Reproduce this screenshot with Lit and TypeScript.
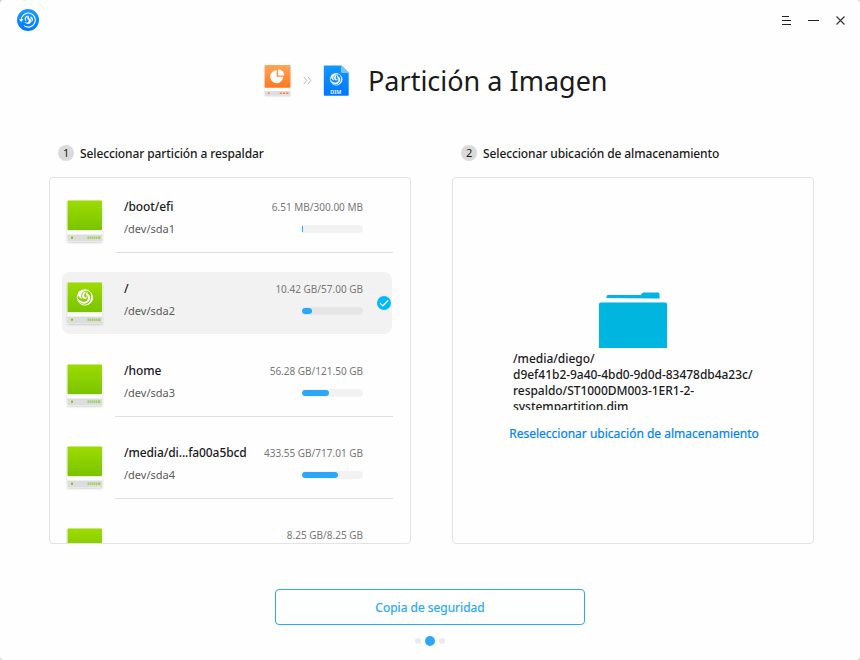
import { LitElement, html, svg, css, nothing } from "lit";
import { customElement, property } from "lit/decorators.js";

interface Partition {
  name: string;
  device: string;
  usage: string;
  fill: number;
  system?: boolean;
  selected?: boolean;
}

const PARTITIONS: Partition[] = [
  { name: "/boot/efi", device: "/dev/sda1", usage: "6.51 MB/300.00 MB", fill: 1 },
  { name: "/", device: "/dev/sda2", usage: "10.42 GB/57.00 GB", fill: 10, system: true, selected: true },
  { name: "/home", device: "/dev/sda3", usage: "56.28 GB/121.50 GB", fill: 27 },
  { name: "/media/di...fa00a5bcd", device: "/dev/sda4", usage: "433.55 GB/717.01 GB", fill: 36 },
  { name: "", device: "", usage: "8.25 GB/8.25 GB", fill: 61 },
];

// Spiral emblem on a 24-unit grid; stroke and fill follow currentColor.
const swirl = svg`
  <circle cx="12" cy="12" r="10.8" fill="none" stroke="currentColor" stroke-width="1.3" />
  <path d="M2.500 5C1.500 9 3.500 13 8.200 14.200C5.600 10.500 6.400 6 10.400 3.500C13 2.300 16 2.200 18 3.200C13.500 0 6 .6 2.500 5Z" fill="currentColor" />
  <path d="M10.600 4.600C6.800 8.600 7.600 13.400 11.600 14.200C14.600 14.400 15.600 11.400 13.800 9.600C14.600 11.600 12.800 12.900 11.600 11.400C10.200 9.400 11 6.600 14 4Z" fill="currentColor" />
  <path d="M16 3.800C13 6 12.600 8.400 14.800 9.800C17.400 12 16.600 16.600 12.400 17.800C8.600 18.800 5 17 1.800 13.200C3.600 20.400 10.600 23 15.600 19.600C20.600 15.800 20.200 10.200 17 8C15.400 6.800 15 5.400 16 3.800Z" fill="currentColor" />
  <path d="M19.600 5.400C22.400 11 20.600 18.500 15 22.400C20.500 21 23 17 23 12Q22.500 7.500 19.600 5.400Z" fill="currentColor" />`;

@customElement("disk-icon")
export class DiskIcon extends LitElement {
  @property({ type: Boolean }) system = false;

  static styles = css`
    :host, svg { display: block; width: 38px; height: 46px; }
    .emblem { color: #fff; }
  `;

  render() {
    return html`<svg viewBox="0.3 0.6 38 46">
      <defs>
        <linearGradient id="g" x2="0" y2="1">
          <stop offset="0" stop-color="#9edb00" /><stop offset="1" stop-color="#7ac400" />
        </linearGradient>
        <filter id="s" x="-20%" y="-20%" width="140%" height="140%">
          <feDropShadow dx="0" dy=".8" stdDeviation=".9" flood-color="#000" flood-opacity=".25" />
        </filter>
      </defs>
      <rect x="1.700" y="1.500" width="34.900" height="40.500" rx="1" fill="#fff" filter="url(#s)" />
      <path d="M2 31H36V30H2Z" fill="#d7efaa" />
      <rect x="1.800" y="1" width="34.500" height="29.600" rx=".8" fill="url(#g)" />
      <path d="M1.700 35H36.600V41a1 1 0 0 1-1 1H2.700a1 1 0 0 1-1-1Z" fill="#dcdddd" />
      <rect x="5.300" y="37.300" width="2" height="2" fill="#7ac400" />
      <path d="M22.500 37v2.600M24.500 37v2.600M26.500 37v2.600M28.500 37v2.600M30.500 37v2.600M32.500 37v2.600M34 37v2.600" stroke="#8bcb2c" />
      ${this.system
        ? svg`<g class="emblem" transform="translate(10.700 7.500) scale(.71)">${swirl}</g>`
        : nothing}
    </svg>`;
  }
}

@customElement("app-root")
export class AppRoot extends LitElement {
  static styles = css`
    * { box-sizing: border-box; }
    :host {
      display: block;
      width: 860px;
      height: 660px;
      overflow: hidden;
      background: #d0d0d0;
      color: #1a1a1a;
      font-family: "Noto Sans", sans-serif;
      font-size: 12px;
    }
    .window {
      display: flex;
      flex-direction: column;
      height: 660px;
      border-radius: 4px;
      background: #fefefe;
    }
    svg { display: block; }
    .titlebar {
      height: 41px;
      flex: none;
      display: flex;
      justify-content: space-between;
      padding: 8px 10px 0 16px;
    }
    .controls { display: flex; gap: 9px; padding-top: 3px; }
    .heading {
      height: 80px;
      flex: none;
      display: flex;
      align-items: center;
      padding-left: 262px;
    }
    .heading > svg { position: relative; top: -.5px; }
    .heading h1 {
      margin: 0 0 0 16px;
      font-size: 27px;
      font-weight: 400;
      line-height: 40px;
      white-space: nowrap;
    }
    .chevrons { margin: 0 10px 0 9px; }
    .dim { font: 600 5px "Noto Sans", sans-serif; }
    .columns {
      display: grid;
      grid-template-columns: 362px 362px;
      gap: 41px;
      padding: 22px 0 0 49px;
    }
    .step {
      display: flex;
      align-items: center;
      gap: 6px;
      height: 20px;
      margin: 0 0 14px 9px;
      font-weight: 500;
      letter-spacing: -.11px;
      white-space: nowrap;
    }
    .number {
      width: 16px;
      height: 16px;
      border-radius: 8px;
      background: #dadada;
      font-size: 11px;
      font-weight: 400;
      line-height: 16px;
      text-align: center;
    }
    .panel {
      height: 367px;
      border: 1px solid #e3e3e3;
      border-radius: 4px;
      overflow: hidden;
    }
    .list { display: flex; flex-direction: column; gap: 20px; padding: 12px 0 0 12px; }
    .row {
      flex: none;
      width: 330px;
      height: 62px;
      display: grid;
      grid-template-columns: 38px 239px 1fr;
      padding: 10px 0 0 4px;
      border-radius: 8px;
      position: relative;
    }
    .row.selected { background: #f2f2f2; }
    .row:not(.selected)::after {
      content: "";
      position: absolute;
      left: 53px;
      right: -1px;
      bottom: -1px;
      height: 1px;
      background: #e1e1e1;
    }
    .info { width: 259px; padding-left: 20px; margin-top: -5px; }
    .line { display: flex; justify-content: space-between; align-items: center; height: 23px; white-space: nowrap; width: 239px; }
    .line + .line { height: 21px; }
    .name { font-weight: 500; line-height: 23px; letter-spacing: -.11px; }
    .device { font-size: 11px; color: #5a5a5a; }
    .usage { font-size: 10px; color: #777; padding-top: 1px; }
    .track { width: 61px; height: 8px; border-radius: 4px; background: #f2f2f2; overflow: hidden; padding: 1px 0; }
    .selected .track { background: #e6e6e6; }
    .fill { height: 6px; border-radius: 3px; background: #2ca7f8; }
    .fill.tiny { border-radius: 0; }
    .tiny-track { border-radius: 0 4px 4px 0; }
    .check { position: absolute; left: 315px; top: 24px; }
    .target { display: flex; flex-direction: column; align-items: center; padding-top: 112px; }
    .path {
      width: 244px;
      height: 62px;
      margin: 0 0 0 4px;
      padding-top: 3px;
      overflow: hidden;
      line-height: 16px;
      white-space: nowrap;
      font-weight: 500;
      letter-spacing: -.035px;
    }
    .again {
      margin: 15px 0 0 2px;
      line-height: 18px;
      color: #0082fa;
      white-space: nowrap;
      -webkit-text-stroke: .2px currentColor;
    }
    .action {
      flex: none;
      width: 310px;
      height: 36px;
      margin: 45px 0 0 275px;
      border: 1px solid #2ca7f8;
      border-radius: 4px;
      background: linear-gradient(#fff, #fbfdfd);
      color: #2ca7f8;
      font: 400 12px "Noto Sans", sans-serif;
      -webkit-text-stroke: .2px currentColor;
      padding: 0;
    }
    .dots { display: flex; justify-content: center; align-items: center; gap: 4px; height: 10px; margin-top: 11px; flex: none; }
    .dot { width: 6px; height: 6px; border-radius: 50%; background: #e7ebf0; }
    .dot.on { width: 10px; height: 10px; background: #2ca7f8; }
  `;

  private row(p: Partition) {
    const tiny = p.fill < 3;
    return html`<div class="row ${p.selected ? "selected" : ""}">
      <disk-icon ?system=${p.system}></disk-icon>
      <div class="info">
        <div class="line"><span class="name">${p.name}</span><span class="usage">${p.usage}</span></div>
        <div class="line">
          <span class="device">${p.device}</span>
          <div class="track ${tiny ? "tiny-track" : ""}"><div class="fill ${tiny ? "tiny" : ""}" style="width:${p.fill}px"></div></div>
        </div>
      </div>
      ${p.selected
        ? html`<svg class="check" width="14" height="14" viewBox="0 0 14 14">
            <circle cx="7" cy="7" r="7" fill="#00baff" />
            <path d="M2.900 7l3 2.900L11.200 4.300" fill="none" stroke="#fff" stroke-width="1.300" />
          </svg>`
        : nothing}
    </div>`;
  }

  render() {
    return html`<div class="window">
      <header class="titlebar">
        <svg width="24" height="24" viewBox="0 0 24 24">
          <defs><linearGradient id="b" x2="0" y2="1"><stop stop-color="#1b9cff" /><stop offset="1" stop-color="#0078ff" /></linearGradient></defs>
          <circle cx="12" cy="12" r="11" fill="url(#b)" />
          <path d="M5.300 12.500A7 7 0 1 1 8 17.600M3.700 11.200l1.500 2 1.600-2" fill="none" stroke="#fff" stroke-width="1.100" />
          <g color="#fff" transform="translate(7.300 7.300) scale(.4)">
            <path d="M8 1C2 5 2 13 8 15C5 10 7 5 12 2Z M14 0C8 6 10 9 13 12C16 15 13 20 3 17C9 25 21 22 20 13C19 9 12 8 14 0Z M18 3C16 7 23 9 21 17C27 11 24 5 18 3Z" fill="currentColor" />
          </g>
        </svg>
        <div class="controls">
          <svg width="18" height="18" viewBox="0 0 18 18"><path d="M4 5.500h7M4 9.500h9M4 13.500h9" stroke="#222" /></svg>
          <svg width="18" height="18" viewBox="0 0 18 18"><path d="M3 9.500h11" stroke="#222" /></svg>
          <svg width="18" height="18" viewBox="0 0 18 18"><path d="M4.500 5.500l8 8M12.500 5.500l-8 8" stroke="#333" stroke-width="1.100" /></svg>
        </div>
      </header>

      <div class="heading">
        <svg width="32" height="34" viewBox="0 0 32 34">
          <defs>
            <linearGradient id="o" x2="0" y2="1"><stop stop-color="#ffa65a" /><stop offset="1" stop-color="#ff771f" /></linearGradient>
            <filter id="f" x="-20%" y="-20%" width="140%" height="140%"><feDropShadow dx="0" dy=".5" stdDeviation=".6" flood-opacity=".25" /></filter>
          </defs>
          <rect x="2.500" y="1" width="26" height="30.500" rx="1" fill="#fff" filter="url(#f)" />
          <rect x="2.600" y="1" width="25.900" height="22.700" rx=".8" fill="url(#o)" />
          <path d="M2.500 27h26v3.700a1 1 0 0 1-1 1h-24a1 1 0 0 1-1-1Z" fill="#dedede" />
          <path d="M6 29.300h1.600M17.800 29.300h2.100M21 29.300h2.100M24.200 29.300h2.100" stroke="#f5833c" stroke-width="1.400" />
          <path d="M14.700 6.200V12.800H21.200A6.500 6.500 0 1 1 14.700 6.200Z" fill="#fff" />
          <path d="M16.200 5.200A6.300 6.300 0 0 1 22.200 11.500H16.200Z" fill="#fff" />
        </svg>
        <svg class="chevrons" width="9" height="9" viewBox="0 0 9 9"><path d="M.8 .8l3 3.700-3 3.700M4.800 .8l3 3.700-3 3.700" fill="none" stroke="#b8b8b8" /></svg>
        <svg width="30" height="34" viewBox="0 0 30 34">
          <defs><linearGradient id="d" x2="0" y2="1"><stop stop-color="#1597ff" /><stop offset="1" stop-color="#0078ff" /></linearGradient></defs>
          <path d="M3 1.500H19.500L26.700 8.700V31a.7.7 0 0 1-.7.700H2.500a.7.700 0 0 1-.7-.700V2.200a.7.700 0 0 1 .7-.700Z" fill="url(#d)" />
          <path d="M19 1.500L26.700 9H20a1 1 0 0 1-1-1Z" fill="#79c6ff" />
          <g color="#fff" transform="translate(7.700 8.800) scale(.54)">${swirl}</g>
          <text class="dim" x="13.700" y="29.500" text-anchor="middle" textLength="11" lengthAdjust="spacingAndGlyphs" fill="#fff">DIM</text>
        </svg>
        <h1>Partición a Imagen</h1>
      </div>

      <main class="columns">
        <section>
          <div class="step"><span class="number">1</span>Seleccionar partición a respaldar</div>
          <div class="panel list">${PARTITIONS.map((p) => this.row(p))}</div>
        </section>
        <section>
          <div class="step"><span class="number">2</span>Seleccionar ubicación de almacenamiento</div>
          <div class="panel target">
            <svg width="72" height="58" viewBox="0 0 72 58">
              <path d="M9.500 8V6.500a1.500 1.500 0 0 1 1.500-1.500H43q1 0 1.800-1.200Q45.500 2.500 47 2.500H61a1.500 1.500 0 0 1 1.500 1.500V9Z" fill="#00b5df" />
              <path d="M8 9H64" stroke="#f4f4f4" stroke-width="1" />
              <path d="M1.500 58V14a2 2 0 0 1 2-2H68.500a2 2 0 0 1 2 2V58Z" fill="none" stroke="#eee" />
              <path d="M2 58V14.500a2 2 0 0 1 2-2H68a2 2 0 0 1 2 2V58Z" fill="#00b5df" />
            </svg>
            <div class="path">/media/diego/<br />d9ef41b2-9a40-4bd0-9d0d-83478db4a23c/<br />respaldo/ST1000DM003-1ER1-2-<br />systempartition.dim</div>
            <div class="again">Reseleccionar ubicación de almacenamiento</div>
          </div>
        </section>
      </main>

      <button class="action">Copia de seguridad</button>
      <div class="dots"><i class="dot"></i><i class="dot on"></i><i class="dot"></i></div>
    </div>`;
  }
}
